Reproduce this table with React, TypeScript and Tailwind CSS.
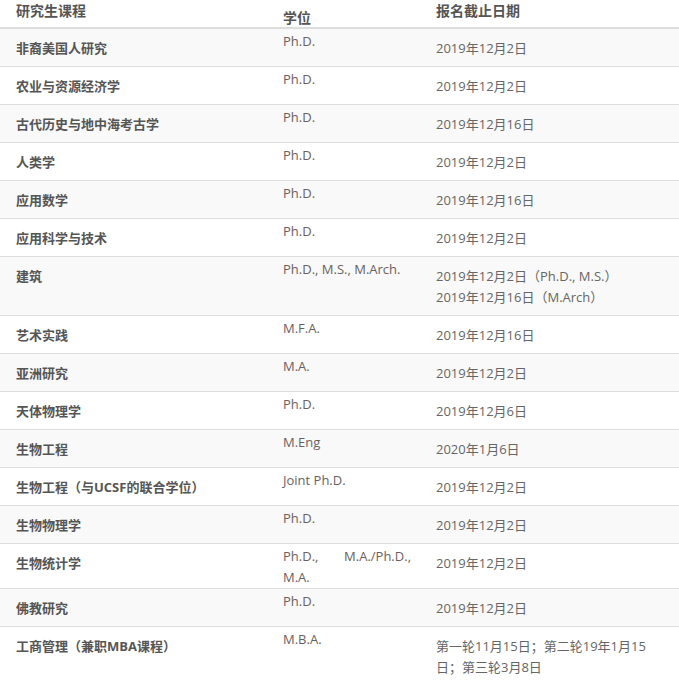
import React from "react";

type Row = { name: string; degree: React.ReactNode; date: React.ReactNode };

const rows: Row[] = [
  { name: "非裔美国人研究", degree: "Ph.D.", date: "2019年12月2日" },
  { name: "农业与资源经济学", degree: "Ph.D.", date: "2019年12月2日" },
  { name: "古代历史与地中海考古学", degree: "Ph.D.", date: "2019年12月16日" },
  { name: "人类学", degree: "Ph.D.", date: "2019年12月2日" },
  { name: "应用数学", degree: "Ph.D.", date: "2019年12月16日" },
  { name: "应用科学与技术", degree: "Ph.D.", date: "2019年12月2日" },
  {
    name: "建筑",
    degree: "Ph.D., M.S., M.Arch.",
    date: (
      <>
        2019年12月2日（Ph.D., M.S.）
        <br />
        2019年12月16日（M.Arch）
      </>
    ),
  },
  { name: "艺术实践", degree: "M.F.A.", date: "2019年12月16日" },
  { name: "亚洲研究", degree: "M.A.", date: "2019年12月2日" },
  { name: "天体物理学", degree: "Ph.D.", date: "2019年12月6日" },
  { name: "生物工程", degree: "M.Eng", date: "2020年1月6日" },
  { name: "生物工程（与UCSF的联合学位）", degree: "Joint Ph.D.", date: "2019年12月2日" },
  { name: "生物物理学", degree: "Ph.D.", date: "2019年12月2日" },
  {
    name: "生物统计学",
    degree: (
      <>
        <span className="flex w-[128px] justify-between">
          <span>Ph.D.,</span>
          <span>M.A./Ph.D.,</span>
        </span>
        <span className="block">M.A.</span>
      </>
    ),
    date: "2019年12月2日",
  },
  { name: "佛教研究", degree: "Ph.D.", date: "2019年12月2日" },
  {
    name: "工商管理（兼职MBA课程）",
    degree: "M.B.A.",
    date: (
      <>
        第一轮11月15日；第二轮19年1月15
        <br />
        日；第三轮3月8日
      </>
    ),
  },
];

const font = { fontFamily: '"Open Sans", "Noto Sans CJK SC", sans-serif' };

export default function App() {
  return (
    <div className="w-[679px] bg-white text-[13px] leading-[21px] text-[#666]" style={font}>
      <div className="grid grid-cols-[283px_153px_1fr] border-b-2 border-[#dddddd] h-[29px]">
        <div className="pl-[16px] pt-0 text-[14px] font-bold text-[#555]">研究生课程</div>
        <div className="pt-[7px] text-[14px] font-bold text-[#555]">学位</div>
        <div className="pt-0 text-[14px] font-bold text-[#555]">报名截止日期</div>
      </div>
      {rows.map((r, i) => (
        <div
          key={i}
          className={
            "grid grid-cols-[283px_153px_1fr] border-b border-[#dddddd] items-start " +
            (i % 2 === 0 ? "bg-[#f9f9f9]" : "bg-white")
          }
        >
          <div className="pl-[16px] pt-[9px] pb-[7px] font-bold text-[#555]">{r.name}</div>
          <div className="pt-[2px] text-[#6b6060]">{r.degree}</div>
          <div className="pt-[9px] pb-[7px] pr-[10px]">{r.date}</div>
        </div>
      ))}
    </div>
  );
}
